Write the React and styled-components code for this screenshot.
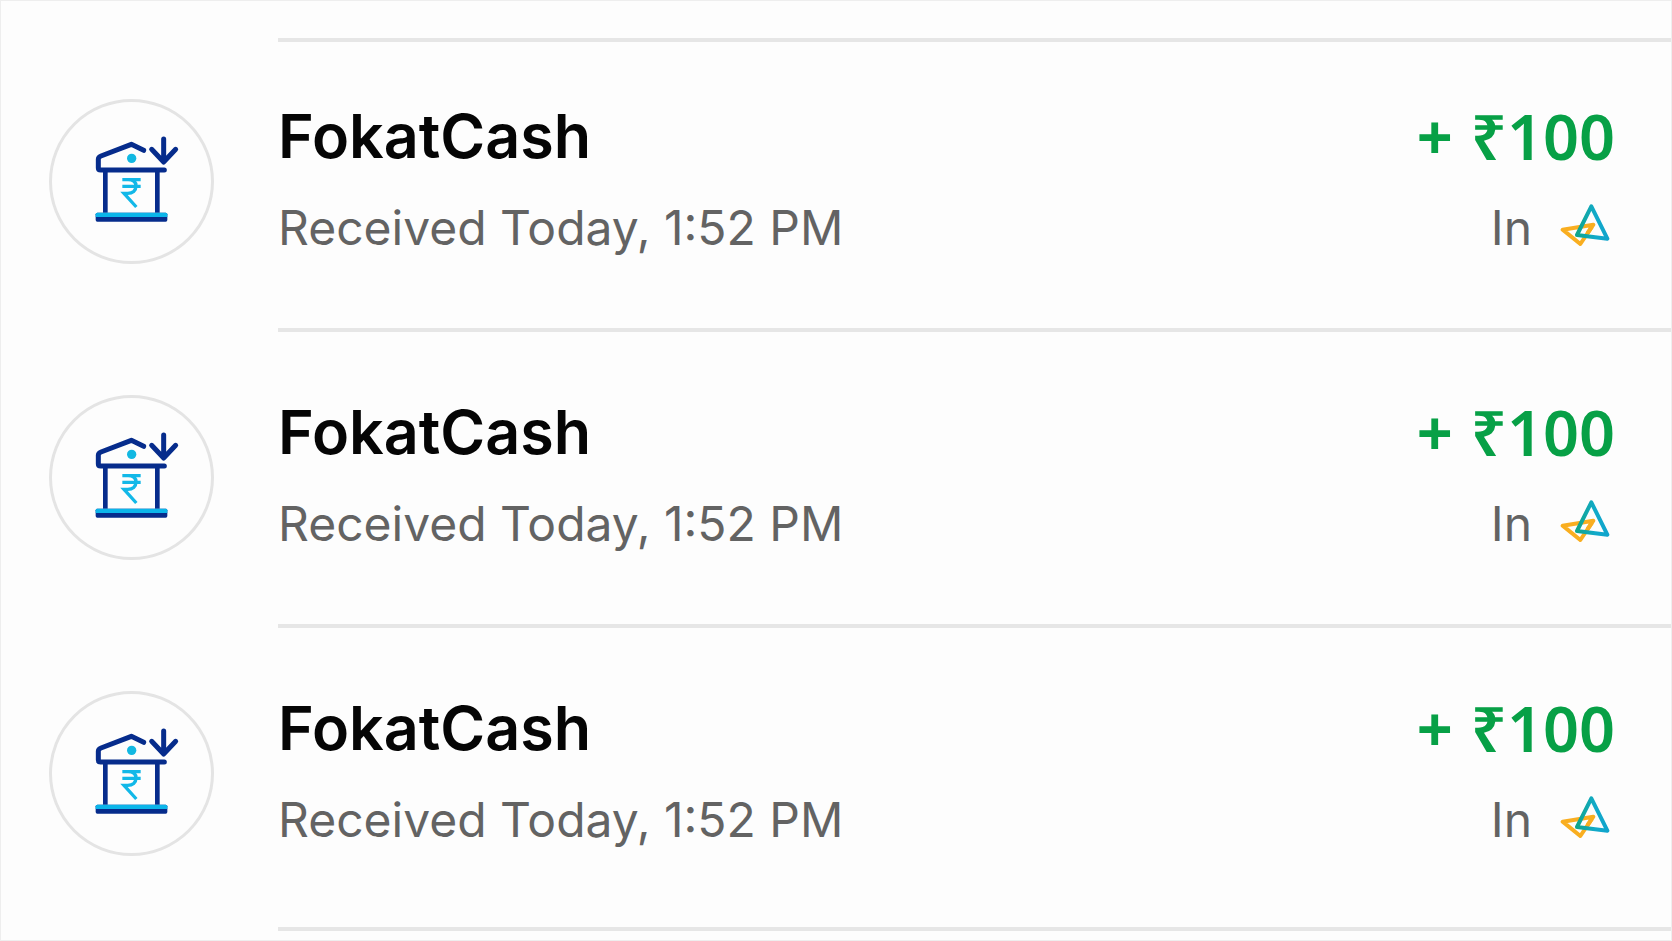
import React from "react";
import styled, { createGlobalStyle } from "styled-components";

const TRANSACTIONS = [
  { id: 1, name: "FokatCash", time: "Received Today, 1:52 PM", sign: "+", amount: "₹100" },
  { id: 2, name: "FokatCash", time: "Received Today, 1:52 PM", sign: "+", amount: "₹100" },
  { id: 3, name: "FokatCash", time: "Received Today, 1:52 PM", sign: "+", amount: "₹100" },
];

const GlobalStyle = createGlobalStyle`
  * {
    box-sizing: border-box;
  }
  body {
    margin: 0;
    background: #fdfdfd;
    font-family: Inter, "Noto Sans", sans-serif;
  }
`;
const StyledPage = styled.main`
  min-height: 100vh;
  padding-top: 37px;
  border: 1px solid #eeeeee;
`;
const StyledList = styled.ul`
  list-style: none;
  margin: 0;
  padding: 0;
`;
const StyledDivider = styled.div`
  height: 4px;
  margin-left: 277px;
  background: #e6e6e6;
`;
const StyledRow = styled.div`
  display: flex;
  align-items: flex-start;
  padding: ${({ $first }) => ($first ? "57px" : "63px")} 56px
    ${({ $last }) => ($last ? "71px" : "64px")} 48px;
`;
const StyledAvatar = styled.div`
  display: flex;
  align-items: center;
  justify-content: center;
  flex: none;
  width: 165px;
  height: 165px;
  margin-right: 64px;
  border: 3px solid #e4e4e4;
  border-radius: 50%;
`;
const StyledDetails = styled.div`
  flex: 1;
`;
const StyledAside = styled.div`
  display: flex;
  flex-direction: column;
  align-items: flex-end;
`;
const StyledName = styled.h2`
  margin: 0;
  padding-top: 3px;
  font-size: 61px;
  line-height: 68px;
  font-weight: 600;
  color: #050505;
`;
const StyledAmount = styled.div`
  display: flex;
  align-items: baseline;
  gap: 18px;
  padding-top: 3px;
  font-family: "Noto Sans", Inter, sans-serif;
  font-size: 63px;
  line-height: 68px;
  font-weight: 600;
  color: #07a046;
`;
const StyledSign = styled.span`
  font-weight: 700;
`;
const StyledMeta = styled.div`
  display: flex;
  align-items: center;
  gap: 28px;
  margin-top: 30px;
  font-size: 48px;
  line-height: 56px;
  color: #636363;
`;

const BankIcon = () => (
  <svg width="96" height="96" viewBox="130 130 288 288" fill="none" aria-hidden="true">
    <g stroke="#062c8c" strokeLinecap="round" strokeLinejoin="round">
      <path d="M309 179L272 161L181 196Q173 199 173 206V232Q173 238 180 238H371" strokeWidth="15" />
      <path d="M194 242V366M350 242V366" strokeWidth="14" strokeLinecap="butt" />
      <path d="M369 145V212M333 176L369 214L405 176" strokeWidth="15" />
    </g>
    <rect x="165" y="366" width="215" height="27" rx="5" fill="#062c8c" />
    <path d="M165 379V371Q165 366 170 366H375Q380 366 380 371V379Z" fill="#0bb5ea" />
    <circle cx="273" cy="203" r="14" fill="#12b8e2" />
    <path
      d="M245 267H300M245 287H300M246 267H262C280 267 286 275 286 286C286 300 276 308 261 308H250L287 349"
      stroke="#12b8e8"
      strokeWidth="10"
    />
  </svg>
);

const WalletIcon = () => (
  <svg width="55" height="48" viewBox="58 41 165 144" fill="none" role="img" aria-label="bank account">
    <defs>
      <linearGradient id="tealEdge" x1="110" y1="0" x2="200" y2="0" gradientUnits="userSpaceOnUse">
        <stop offset="0" stopColor="#10a58c" />
        <stop offset="0.6" stopColor="#12aaca" />
        <stop offset="1" stopColor="#10a4cc" />
      </linearGradient>
    </defs>
    <path d="M66 118L158 103L119 161Z" stroke="#f9ae20" strokeWidth="12" strokeLinejoin="round" />
    <path d="M152 48L200 145L109 134Z" stroke="url(#tealEdge)" strokeWidth="12" strokeLinejoin="round" />
    <path d="M141 128L154 109" stroke="#f9ae20" strokeWidth="12" />
  </svg>
);

const Transaction = ({ name, time, sign, amount, first, last }) => {
  return (
    <li>
      <StyledRow $first={first} $last={last}>
        <StyledAvatar>
          <BankIcon />
        </StyledAvatar>
        <StyledDetails>
          <StyledName>{name}</StyledName>
          <StyledMeta>{time}</StyledMeta>
        </StyledDetails>
        <StyledAside>
          <StyledAmount>
            <StyledSign>{sign}</StyledSign>
            <span>{amount}</span>
          </StyledAmount>
          <StyledMeta>
            <span>In</span>
            <WalletIcon />
          </StyledMeta>
        </StyledAside>
      </StyledRow>
      <StyledDivider />
    </li>
  );
};

const App = () => {
  return (
    <>
      <GlobalStyle />
      <StyledPage>
        <StyledDivider />
        <StyledList>
          {TRANSACTIONS.map((ele, index) => (
            <Transaction
              key={ele.id}
              name={ele.name}
              time={ele.time}
              sign={ele.sign}
              amount={ele.amount}
              first={index === 0}
              last={index === TRANSACTIONS.length - 1}
            />
          ))}
        </StyledList>
      </StyledPage>
    </>
  );
};

export default App;
